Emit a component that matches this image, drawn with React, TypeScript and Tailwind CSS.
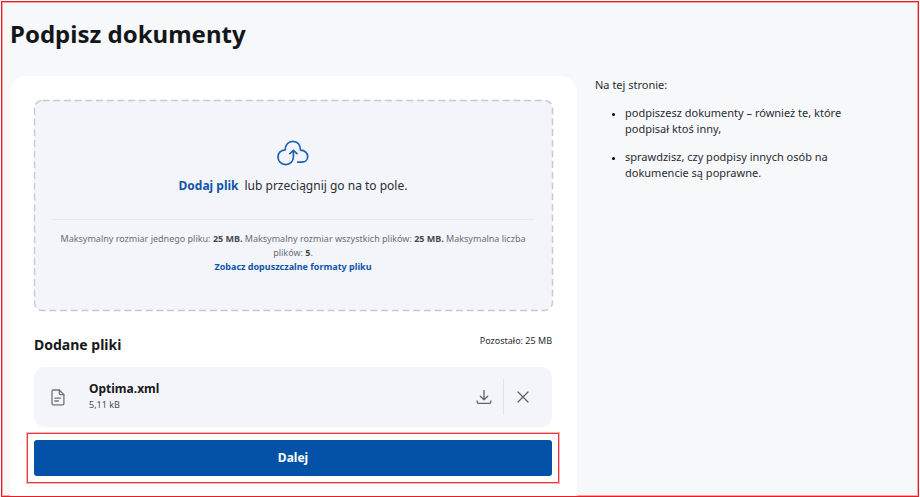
import React from 'react';

const TIPS = [
  'podpiszesz dokumenty – również te, które podpisał ktoś inny,',
  'sprawdzisz, czy podpisy innych osób na dokumencie są poprawne.',
];

const FILES = [{ id: 'optima', name: 'Optima.xml', size: '5,11 kB' }];

// --- Icons ---
function CloudUploadIcon() {
  return (
    <svg width="32" height="26" viewBox="0 0 32 26" fill="none" stroke="#1a62b3" strokeWidth="1.7" strokeLinecap="round" strokeLinejoin="round" aria-hidden="true">
      <path d="M20.7 22.1h4.1c3.3 0 5.9-2.3 5.9-5.700 0-3.300-2.900-6-7.200-6.200C23.500 5 20.600 1.300 15.900 1.300c-4.400 0-7.500 3.300-7.700 8.500C4 10 1 13 1 17c0 4.200 3.300 7.600 7.700 7.600 4.300 0 7.700-3.200 7.700-7.600v-5.600" />
      <path d="M12.9 13.6l3.5-3.200 3.500 3.200" />
    </svg>
  );
}

function FileIcon() {
  return (
    <svg width="14" height="17" viewBox="0 0 14 17" fill="none" stroke="#6f7378" strokeWidth="1.3" strokeLinecap="round" strokeLinejoin="round" aria-hidden="true">
      <path d="M8.300 1H2.200C1.400 1 1 1.500 1 2.200v12.400c0 .8.500 1.300 1.200 1.300h9.500c.8 0 1.200-.5 1.200-1.300V5.700z" />
      <path d="M8.300 1v3.600c0 .7.400 1.100 1.100 1.100h3.500M3.800 9.200h5.800M3.800 12h3.600" />
    </svg>
  );
}

function DownloadIcon() {
  return (
    <svg width="16" height="16" viewBox="0 0 16 16" fill="none" stroke="#5f6368" strokeWidth="1.3" strokeLinecap="round" strokeLinejoin="round" aria-hidden="true">
      <path d="M8 1.500v9M4.300 7.200L8 10.700l3.700-3.500" />
      <path d="M1.200 11.800v1.300c0 .8.500 1.300 1.300 1.300h11c.8 0 1.300-.5 1.300-1.300v-1.300" />
    </svg>
  );
}

function CloseIcon() {
  return (
    <svg width="12" height="12" viewBox="0 0 12 12" fill="none" stroke="#5f6368" strokeWidth="1.3" strokeLinecap="round" aria-hidden="true">
      <path d="M1 1l10 10M11 1L1 11" />
    </svg>
  );
}

function DropZone() {
  return (
    <div className="relative flex flex-col items-center rounded-lg bg-[#f4f5fb] px-[18px] pt-10 pb-9 text-center">
      {/* Dashed outline */}
      <svg className="pointer-events-none absolute inset-0 h-full w-full overflow-visible" aria-hidden="true">
        <rect x="0.5" y="0.5" width="100%" height="100%" rx="8" fill="none" stroke="#c6c9ce" strokeWidth="1.4" strokeDasharray="7 3.7" />
      </svg>

      <CloudUploadIcon />
      <p className="mt-2 text-xs leading-6 text-[#292d31]">
        <button type="button" className="mr-1.5 font-bold text-[#0f56a8]">Dodaj plik</button>
        lub przeciągnij go na to pole.
      </p>

      <div className="mt-[21px] w-full border-t border-[#e6e8ee] pt-3 text-[9px] leading-[14px] text-[#6a6e74]">
        <p>
          Maksymalny rozmiar jednego pliku: <b className="text-[#45494e]">25 MB.</b> Maksymalny rozmiar wszystkich plików:{' '}
          <b className="text-[#45494e]">25 MB.</b> Maksymalna liczba plików: <b className="text-[#45494e]">5</b>.
        </p>
        <a href="#formaty" className="block font-bold text-[#0f56a8]">Zobacz dopuszczalne formaty pliku</a>
      </div>
    </div>
  );
}

function FileRow({ file }: { file: { name: string; size: string } }) {
  return (
    <li className="flex h-[60px] items-center rounded-[10px] bg-[#f4f5fb] pl-[17px] pr-[11px]">
      <FileIcon />
      <div className="ml-6 flex-1">
        <p className="text-xs leading-4 font-bold text-[#17191c]">{file.name}</p>
        <p className="text-[9px] leading-4 text-[#45494e]">{file.size}</p>
      </div>
      <button type="button" aria-label="Pobierz plik" className="flex h-9 w-[38px] items-center justify-center">
        <DownloadIcon />
      </button>
      <button type="button" aria-label="Usuń plik" className="flex h-9 w-[38px] items-center justify-center border-l border-[#e2e4ea]">
        <CloseIcon />
      </button>
    </li>
  );
}

export default function App() {
  return (
    <div className="flex min-h-screen flex-col bg-white px-px pt-px font-['Noto_Sans','Open_Sans',sans-serif]">
      <div className="flex flex-1 flex-col border border-[#ec1c24] bg-[#f6f8fa] px-2 shadow-[inset_0_0_0_1px_#f7a6a8]">
        <h1 className="pt-4 pb-[26px] text-2xl leading-8 font-bold text-[#14171a]">Podpisz dokumenty</h1>

        <div className="grid flex-1 grid-cols-[9fr_5fr] gap-[18px]">
          <main className="rounded-t-2xl bg-white pt-6 pr-[25px] pb-3 pl-6">
            <DropZone />

            <div className="mt-[25px] flex items-start justify-between">
              <h2 className="text-sm leading-5 font-bold text-[#17191c]">Dodane pliki</h2>
              <span className="text-[9px] leading-3 text-[#292d31]">Pozostało: 25 MB</span>
            </div>

            <ul className="mt-3">
              {FILES.map((file) => (
                <FileRow key={file.id} file={file} />
              ))}
            </ul>

            {/* Highlighted action */}
            <div className="-mx-[7px] mt-1.5 border border-[#ee3a3f] p-1.5 shadow-[0_0_0_1px_#f7b4b6]">
              <button type="button" className="h-9 w-full rounded-[3px] bg-[#0352a8] text-xs font-bold text-white">
                Dalej
              </button>
            </div>
          </main>

          <aside className="pt-px text-[11px] leading-4 text-[#292d31]">
            <p>Na tej stronie:</p>
            <ul className="mt-3 list-disc space-y-3 pr-16 pl-[30px] marker:text-[9px] marker:text-black">
              {TIPS.map((tip) => (
                <li key={tip}>{tip}</li>
              ))}
            </ul>
          </aside>
        </div>
      </div>
    </div>
  );
}
